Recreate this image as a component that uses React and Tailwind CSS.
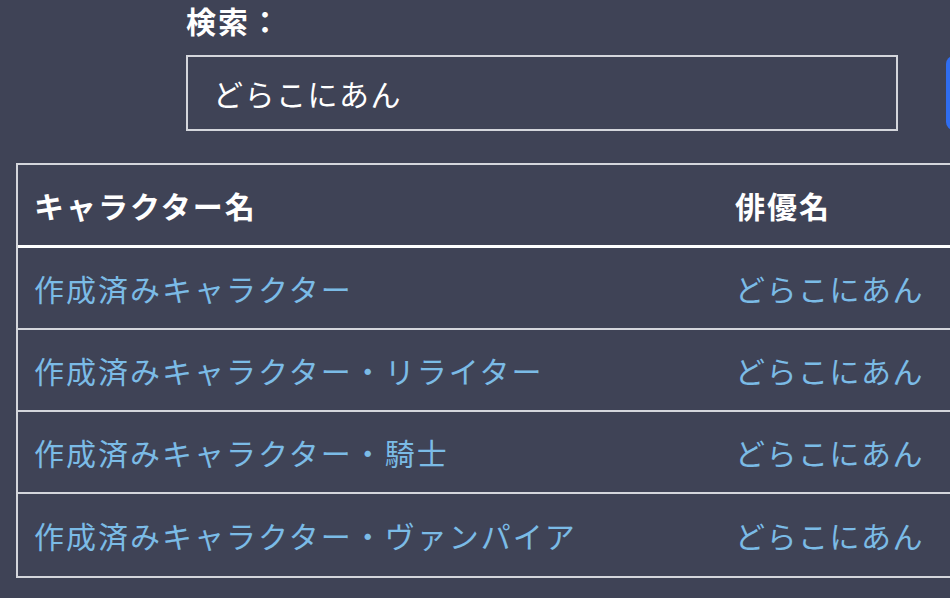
const rows = [
  "作成済みキャラクター",
  "作成済みキャラクター・リライター",
  "作成済みキャラクター・騎士",
  "作成済みキャラクター・ヴァンパイア",
];

export default function App() {
  return (
    <div
      className="w-[950px] h-[598px] overflow-hidden bg-[#3f4356] text-white"
      style={{ fontFamily: '"Noto Sans CJK JP", "Noto Sans", sans-serif' }}
    >
      {/* SEARCH */}
      <div className="pl-[186px]">
        <div className="text-[30px] font-bold leading-[40px] h-[40px] tracking-[2px]">検索：</div>
        <div className="flex items-center mt-[15px] gap-[48px]">
          <div className="shrink-0 w-[712px] h-[76px] border-2 border-[#d4d6dc] flex items-center pl-[25px] text-[30px] tracking-[1.5px]">
            どらこにあん
          </div>
          <div className="shrink-0 w-[20px] h-[74px] rounded-[8px] bg-[#2f6df0]" />
        </div>
      </div>

      {/* TABLE */}
      <div className="ml-[16px] mt-[32px] w-[1000px] border-2 border-[#d4d6dc]">
        <div className="flex h-[83px] items-center border-b-[3px] border-white text-[30px] font-bold tracking-[2px]">
          <div className="w-[717px] pl-[16px]">キャラクター名</div>
          <div>俳優名</div>
        </div>
        {rows.map((name, i) => (
          <div
            key={i}
            className={
              "flex h-[82px] items-center text-[30px] text-[#7bbbe6] tracking-[2px] " +
              (i < rows.length - 1 ? "border-b-2 border-[#d4d6dc]" : "")
            }
          >
            <div className="w-[717px] pl-[16px]">{name}</div>
            <div className="tracking-[1.5px]">どらこにあん</div>
          </div>
        ))}
      </div>
    </div>
  );
}
